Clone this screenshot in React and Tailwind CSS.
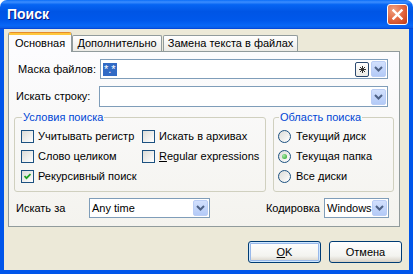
import React from 'react';

const Chevron = () => (
  <svg width="9" height="6" viewBox="0 0 9 6">
    <path d="M1 1 L4.5 4.5 L8 1" stroke="#4D6185" strokeWidth="2" fill="none" />
  </svg>
);

const DropBtn = () => (
  <div className="w-[15px] h-[16px] rounded-[2px] border border-[#BACDF5] bg-[linear-gradient(to_bottom,#D2E0FD,#B3CAF7)] flex items-center justify-center shrink-0">
    <Chevron />
  </div>
);

const Combo = ({ className, children, extra }) => (
  <div className={`flex items-center h-[20px] border border-[#7F9DB9] bg-white pl-[2px] pr-[1px] ${className}`}>
    <div className="flex-1 flex items-center min-w-0 whitespace-nowrap">{children}</div>
    {extra}
    <DropBtn />
  </div>
);

const Check = ({ checked }) => (
  <div className="w-[13px] h-[13px] border border-[#1C5180] bg-[linear-gradient(135deg,#DCDCD7,#FFFFFF)] flex items-center justify-center shrink-0">
    {checked && (
      <svg width="7" height="7" viewBox="0 0 7 7">
        <path d="M0.5 3 L2.5 5.2 L6.5 1" stroke="#21A121" strokeWidth="1.8" fill="none" />
      </svg>
    )}
  </div>
);

const Radio = ({ checked }) => (
  <div className="w-[13px] h-[13px] rounded-full border border-[#1C5180] bg-[linear-gradient(135deg,#DCDCD7,#FFFFFF)] flex items-center justify-center shrink-0">
    {checked && <div className="w-[5px] h-[5px] rounded-full bg-[radial-gradient(circle_at_35%_35%,#A7E8A7,#21A121)]" />}
  </div>
);

const CheckRow = ({ checked, children }) => (
  <div className="flex items-center h-[20px] gap-[4px] whitespace-nowrap">
    <Check checked={checked} />
    <span>{children}</span>
  </div>
);

const RadioRow = ({ checked, children }) => (
  <div className="flex items-center h-[20px] gap-[5px] whitespace-nowrap">
    <Radio checked={checked} />
    <span>{children}</span>
  </div>
);

const Button = ({ children, isDefault, className }) => (
  <div className={`h-[22px] rounded-[3px] border border-[#003C74] bg-[linear-gradient(to_bottom,#FFFFFF,#F3F3EF_70%,#D6D0C5)] flex items-center justify-center ${isDefault ? 'shadow-[inset_0_0_0_1px_#CEE7FF,inset_0_0_0_2px_#98B8EA]' : ''} ${className}`}>
    {children}
  </div>
);

export default function App() {
  return (
    <div className="w-[413px] h-[274px] flex flex-col font-['Tahoma','Liberation_Sans',sans-serif] text-[11px] text-black select-none">
      {/* title bar */}
      <div className="h-[29px] shrink-0 rounded-t-[7px] bg-[linear-gradient(to_bottom,#0A6DF8_0%,#3C8EFF_7%,#0665F3_16%,#0055E5_40%,#0058EB_70%,#0866F6_88%,#0A5EE8_95%,#003DD7_100%)] flex items-center pl-[7px] pr-[5px]">
        <span className="text-white font-bold text-[14px] font-['Liberation_Sans',sans-serif] [text-shadow:1px_1px_0_#0A1883]">Поиск</span>
        <div className="ml-auto w-[21px] h-[21px] rounded-[3px] border border-white bg-[radial-gradient(circle_at_30%_25%,#F0A080,#E0623C_55%,#C03A14)] flex items-center justify-center">
          <svg width="11" height="11" viewBox="0 0 11 11">
            <path d="M1.5 1.5 L9.5 9.5 M9.5 1.5 L1.5 9.5" stroke="#FFFFFF" strokeWidth="2.4" strokeLinecap="square" />
          </svg>
        </div>
      </div>

      {/* body */}
      <div className="flex-1 flex flex-col bg-[#ECE9D8] border-x-[4px] border-b-[4px] border-[#0055EA] pl-[4px] pt-[3px]">
        {/* tabs */}
        <div className="flex items-end h-[19px]">
          <div className="relative z-10 w-[64px] h-[20px] -mb-[1px] rounded-t-[3px] border border-b-0 border-[#919B9C] border-t-[#E68B2C] bg-[#FCFCFE] flex flex-col">
            <div className="h-[2px] bg-[#FFC73C]" />
            <div className="flex-1 flex items-center justify-center">Основная</div>
          </div>
          <div className="w-[90px] h-[16px] rounded-t-[2px] border border-b-0 border-[#919B9C] bg-[linear-gradient(to_bottom,#FFFFFF,#ECEBE6)] flex items-center justify-center">
            Дополнительно
          </div>
          <div className="w-[135px] h-[16px] ml-[1px] rounded-t-[2px] border border-b-0 border-[#919B9C] bg-[linear-gradient(to_bottom,#FFFFFF,#ECEBE6)] flex items-center justify-center">
            Замена текста в файлах
          </div>
        </div>

        {/* panel */}
        <div className="w-[392px] h-[176px] border border-[#919B9C] bg-[linear-gradient(to_bottom,#FCFCFE,#F4F3EE)] flex flex-col pt-[7px]">
          <div className="flex items-center h-[20px]">
            <div className="w-[91px] pl-[9px]">Маска файлов:</div>
            <Combo
              className="w-[288px]"
              extra={
                <div className="w-[14px] h-[15px] mr-[2px] rounded-[2px] border border-[#2C4A70] bg-[linear-gradient(to_bottom,#FFFFFF,#ECEBE6)] flex items-center justify-center shrink-0">
                  <svg width="7" height="7" viewBox="0 0 7 7">
                    <path d="M3.5 0v7M0 3.5h7M1 1l5 5M6 1l-5 5" stroke="#333" strokeWidth="1" />
                  </svg>
                </div>
              }
            >
              <span className="bg-[#316AC5] text-white px-[1px] leading-[13px]">*.*</span>
            </Combo>
          </div>

          <div className="flex items-center h-[21px] mt-[7px]">
            <div className="w-[90px] pl-[7px]">Искать строку:</div>
            <Combo className="w-[289px] h-[21px]" />
          </div>

          <div className="flex mt-[4px] pl-[5px] gap-[7px]">
            <fieldset className="w-[252px] h-[81px] border border-[#D0D0BF] rounded-[3px] pl-[6px]">
              <legend className="text-[#0046D5] ml-[1px] px-[1px] leading-[13px]">Условия поиска</legend>
              <div className="grid grid-cols-[121px_1fr] mt-[2px]">
                <CheckRow>Учитывать регистр</CheckRow>
                <CheckRow>Искать в архивах</CheckRow>
                <CheckRow>Слово целиком</CheckRow>
                <CheckRow><span className="underline">R</span>egular expressions</CheckRow>
                <CheckRow checked>Рекурсивный поиск</CheckRow>
              </div>
            </fieldset>
            <fieldset className="w-[121px] h-[81px] border border-[#D0D0BF] rounded-[3px] pl-[4px]">
              <legend className="text-[#0046D5] ml-[1px] px-[1px] leading-[13px]">Область поиска</legend>
              <div className="flex flex-col mt-[2px]">
                <RadioRow>Текущий диск</RadioRow>
                <RadioRow checked>Текущая папка</RadioRow>
                <RadioRow>Все диски</RadioRow>
              </div>
            </fieldset>
          </div>

          <div className="flex items-center h-[20px] mt-[6px] pl-[7px]">
            <div className="w-[73px]">Искать за</div>
            <Combo className="w-[121px]">Any time</Combo>
            <div className="ml-auto mr-[4px]">Кодировка</div>
            <Combo className="w-[65px] mr-[10px]">Windows</Combo>
          </div>
        </div>

        {/* buttons */}
        <div className="flex justify-end gap-[8px] mt-[14px] pr-[7px]">
          <Button isDefault className="w-[73px]"><span className="underline">O</span>K</Button>
          <Button className="w-[73px]">Отмена</Button>
        </div>
      </div>
    </div>
  );
}
